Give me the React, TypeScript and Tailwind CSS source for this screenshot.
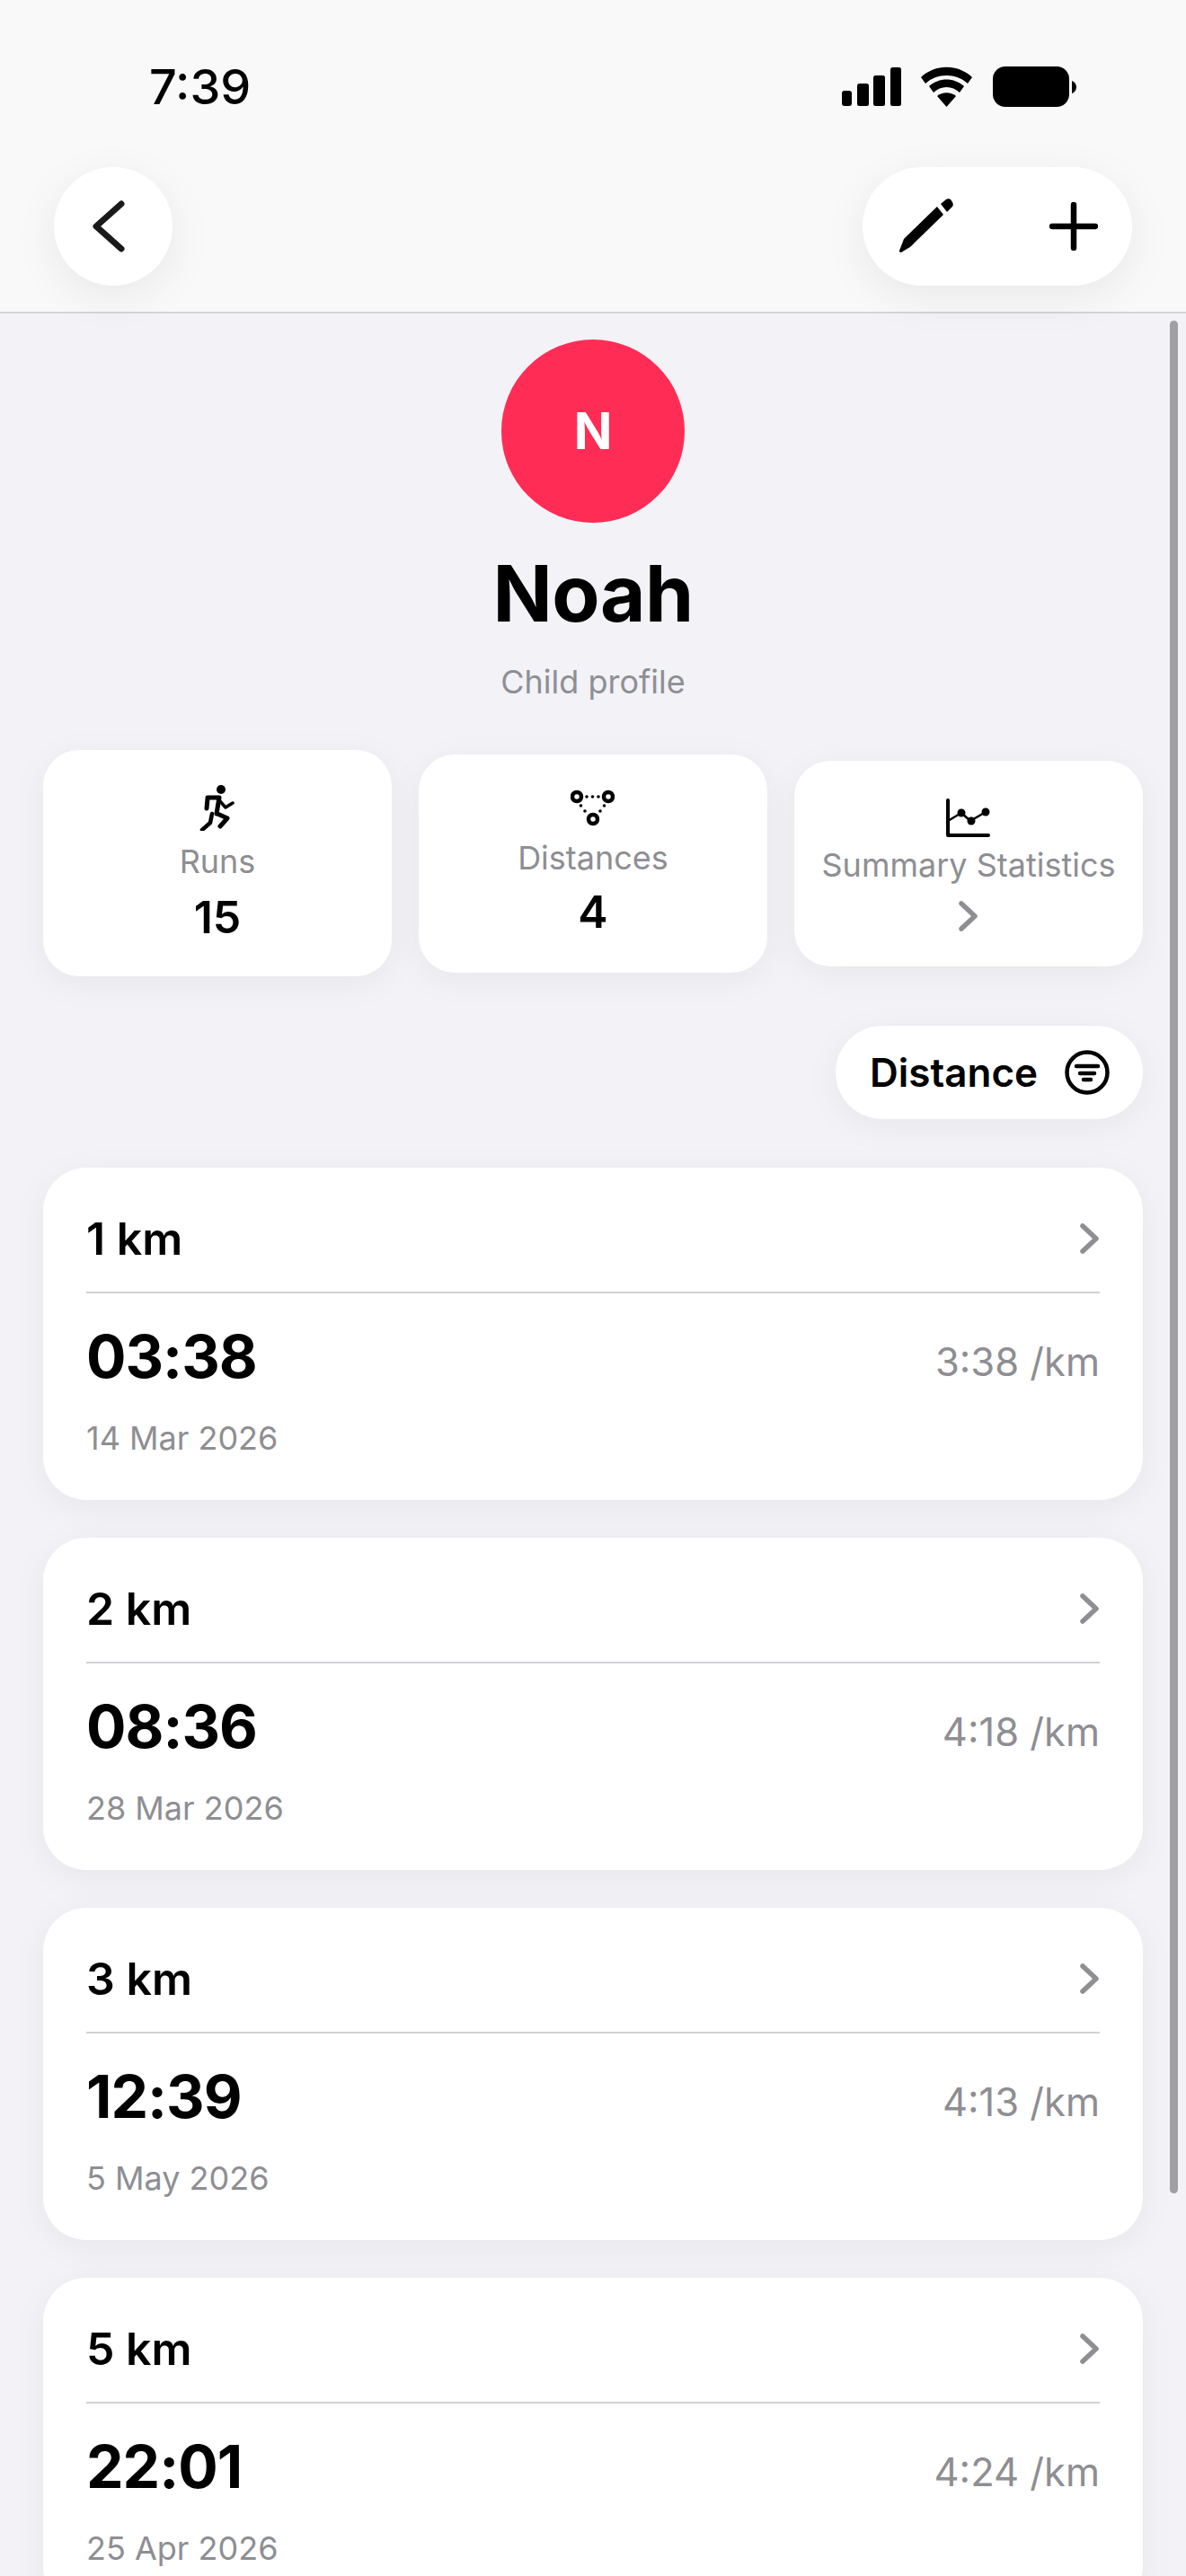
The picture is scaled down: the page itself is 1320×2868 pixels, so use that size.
const font = { fontFamily: "Inter, 'Noto Sans', sans-serif" };

const runs = [
  { distance: "1 km", time: "03:38", date: "14 Mar 2026", pace: "3:38 /km" },
  { distance: "2 km", time: "08:36", date: "28 Mar 2026", pace: "4:18 /km" },
  { distance: "3 km", time: "12:39", date: "5 May 2026", pace: "4:13 /km" },
  { distance: "5 km", time: "22:01", date: "25 Apr 2026", pace: "4:24 /km" },
];

const StatusIcons = () => (
  <svg width="262" height="46" viewBox="0 0 262 46" fill="#000">
    <rect x="1" y="27" width="11" height="17" rx="3" />
    <rect x="18" y="19" width="13" height="25" rx="2.5" />
    <rect x="36" y="10" width="13" height="34" rx="2.5" />
    <rect x="55" y="1" width="12" height="43" rx="2.5" />
    <path d="M89 12C105 -3 130 -3 146 12L141 19C128 7 107 7 94 19Z" />
    <path d="M98 22C109 12 126 12 137 22L132 29C124 21 111 21 103 29Z" />
    <path d="M107 33C113 28 122 28 128 33L117.500 45Z" />
    <rect x="169" y="0" width="85" height="45" rx="14" />
    <path d="M257 16C260 17 262 20 262 23C262 26 260 29 257 30Z" />
  </svg>
);

const Pencil = () => (
  <svg width="62" height="62" viewBox="0 0 62 62" fill="#000">
    <path d="M6 45L43 9L50 18L13 54L3 60C1 60 1 59 1 58Z" />
    <path d="M47 6L53 1C55 0 56 0 58 1L60 4C61 6 61 8 60 9L54 15Z" />
  </svg>
);

const Runner = () => (
  <svg width="40" height="52" viewBox="0 0 40 52" fill="none" stroke="#000" strokeLinecap="round" strokeLinejoin="round">
    <circle cx="24" cy="6" r="5" fill="#000" stroke="none" />
    <path d="M9 16L8 27M9 15L22 15L19 33" strokeWidth="5" />
    <path d="M22 18L29 26L37 21" strokeWidth="3.500" />
    <path d="M20 33L31 38L23 47" strokeWidth="5" />
    <path d="M14 33L12 43L3 51" strokeWidth="4.500" />
  </svg>
);

const Triangle = () => (
  <svg width="50" height="44" viewBox="0 0 50 44" fill="#000">
    <g fill="none" stroke="#000" strokeWidth="4.500">
      <circle cx="7" cy="8" r="5" />
      <circle cx="42" cy="8" r="5" />
      <circle cx="25" cy="33" r="5" />
    </g>
    <circle cx="18" cy="8" r="1.800" />
    <circle cx="24.500" cy="8" r="1.800" />
    <circle cx="31" cy="8" r="1.800" />
    <circle cx="11.500" cy="18" r="1.800" />
    <circle cx="16" cy="24" r="1.800" />
    <circle cx="37.500" cy="18" r="1.800" />
    <circle cx="33" cy="24" r="1.800" />
  </svg>
);

const Chart = () => (
  <svg width="52" height="44" viewBox="0 0 52 44" fill="none" stroke="#000" strokeLinecap="round" strokeLinejoin="round">
    <path d="M3 2V41H48" strokeWidth="4" />
    <path d="M3 25L18 16L28 25L45 15" strokeWidth="2.500" />
    <g fill="#000" stroke="none">
      <circle cx="18" cy="16" r="4.500" />
      <circle cx="29" cy="25" r="4.500" />
      <circle cx="45" cy="15" r="4.500" />
    </g>
  </svg>
);

const Chevron = () => (
  <svg width="22" height="34" viewBox="0 0 22 34" fill="none" stroke="#8e8e93" strokeWidth="5.500" strokeLinecap="round" strokeLinejoin="round">
    <path d="M3 3L18 17L3 31" />
  </svg>
);

const App = () => {
  return (
    <div className="relative h-[2868px] w-[1320px] overflow-hidden bg-[#f2f2f7]" style={font}>
      <header className="h-[349px] border-b-2 border-[#d4d4d8] bg-[#f9f9f9]">
        <div className="flex h-[186px] items-center justify-between pt-[8px] pr-[122px] pl-[166px]">
          <span className="text-[54px] leading-none font-medium text-black">7:39</span>
          <StatusIcons />
        </div>
        <div className="flex items-center justify-between px-[60px]">
          <button className="flex h-[132px] w-[132px] items-center justify-center rounded-full bg-white pr-[10px] shadow-[0_12px_50px_rgba(0,0,0,0.07)]">
            <svg width="36" height="58" viewBox="0 0 36 58" fill="none" stroke="#1a1a1a" strokeWidth="7" strokeLinecap="round" strokeLinejoin="round">
              <path d="M32 4L4 29L32 54" />
            </svg>
          </button>
          <div className="flex h-[132px] w-[300px] items-center gap-[106px] rounded-full bg-white pl-[40px] shadow-[0_12px_50px_rgba(0,0,0,0.07)]">
            <Pencil />
            <svg width="54" height="54" viewBox="0 0 54 54" fill="none" stroke="#000" strokeWidth="6.500" strokeLinecap="round">
              <path d="M27 3V51M3 27H51" />
            </svg>
          </div>
        </div>
      </header>

      <main className="px-[48px] pt-[29px]">
        <div className="flex flex-col items-center">
          <div className="flex h-[204px] w-[204px] items-center justify-center rounded-full bg-[#ff2d55] text-[56px] font-bold text-white">N</div>
          <h1 className="mt-[24px] text-[87px] leading-[110px] font-bold tracking-[-0.5px] text-black">Noah</h1>
          <p className="mt-[21px] text-[36px] leading-[44px] text-[#8e8e93]">Child profile</p>
        </div>

        <div className="mt-[54px] grid h-[252px] grid-cols-3 items-center gap-[30px]">
          <div className="flex h-[252px] flex-col items-center rounded-[40px] bg-white pt-[38px] shadow-[0_8px_40px_rgba(0,0,0,0.05)]">
            <div className="flex h-[52px] items-center"><Runner /></div>
            <p className="mt-[12px] text-[36px] leading-[44px] text-[#8e8e93]">Runs</p>
            <p className="mt-[10px] text-[50px] leading-[60px] font-semibold text-black">15</p>
          </div>
          <div className="flex h-[243px] flex-col items-center rounded-[40px] bg-white pt-[35px] shadow-[0_8px_40px_rgba(0,0,0,0.05)]">
            <div className="flex h-[52px] items-center"><Triangle /></div>
            <p className="mt-[6px] text-[36px] leading-[44px] text-[#8e8e93]">Distances</p>
            <p className="mt-[8px] text-[50px] leading-[60px] font-semibold text-black">4</p>
          </div>
          <div className="flex h-[229px] flex-col items-center rounded-[40px] bg-white pt-[38px] shadow-[0_8px_40px_rgba(0,0,0,0.05)]">
            <div className="flex h-[52px] items-center"><Chart /></div>
            <p className="mt-[4px] text-[36px] leading-[44px] text-[#8e8e93]">Summary Statistics</p>
            <div className="mt-[18px] flex h-[34px] items-center"><Chevron /></div>
          </div>
        </div>

        <div className="mt-[55px] flex justify-end">
          <button className="flex h-[104px] w-[342px] items-center gap-[30px] rounded-full bg-white pl-[38px] text-[44px] font-semibold text-black shadow-[0_8px_40px_rgba(0,0,0,0.05)]">
            Distance
            <svg width="50" height="50" viewBox="0 0 50 50" fill="none" stroke="#000" strokeWidth="4.500" strokeLinecap="round">
              <circle cx="25" cy="25" r="22.500" />
              <path d="M13 18H37M17 26H33M21 33H29" />
            </svg>
          </button>
        </div>

        <div className="mt-[54px] flex flex-col gap-[42px]">
          {runs.map((run) => (
            <div key={run.distance} className="h-[370px] rounded-[48px] bg-white px-[48px] shadow-[0_8px_40px_rgba(0,0,0,0.05)]">
              <div className="flex h-[140px] items-center justify-between border-b-2 border-[#d1d1d6] pt-[20px]">
                <span className="text-[50px] font-semibold text-black">{run.distance}</span>
                <Chevron />
              </div>
              <div className="mt-[32px] flex items-center justify-between">
                <span className="text-[66px] leading-[76px] font-bold tracking-[-1px] text-black">{run.time}</span>
                <span className="relative top-[7px] text-[43.5px] text-[#8e8e93]">{run.pace}</span>
              </div>
              <p className="mt-[31px] text-[36px] leading-[44px] text-[#8e8e93]">{run.date}</p>
            </div>
          ))}
        </div>
      </main>

      <div className="absolute top-[357px] right-[9px] h-[2085px] w-[9px] rounded-full bg-[#a0a0a4]" />
    </div>
  );
};

export default App;
